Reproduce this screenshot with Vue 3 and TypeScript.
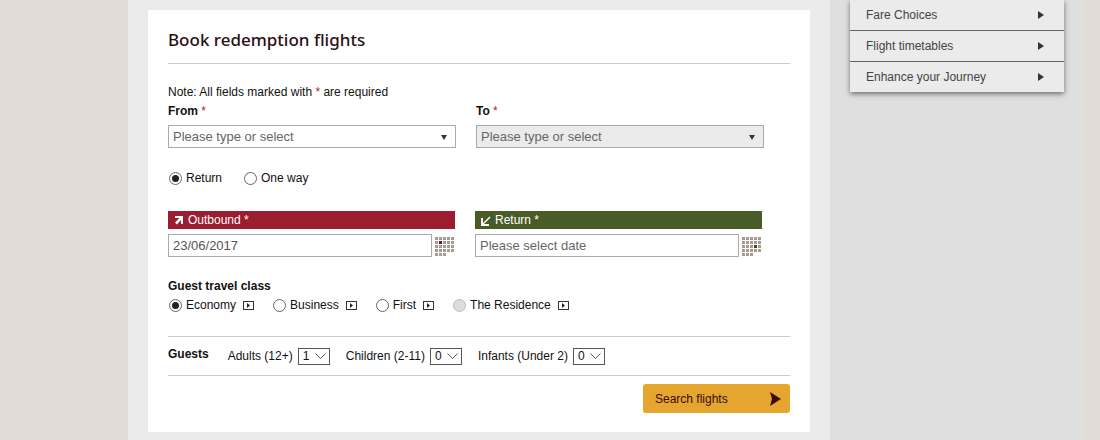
<script setup lang="ts">
import { ref } from 'vue'

interface CabinClass {
  id: string
  label: string
  disabled?: boolean
}
interface GuestType {
  id: string
  label: string
  min: number
}

const links: string[] = ['Fare Choices', 'Flight timetables', 'Enhance your Journey']
const classes: CabinClass[] = [
  { id: 'economy', label: 'Economy' },
  { id: 'business', label: 'Business' },
  { id: 'first', label: 'First' },
  { id: 'residence', label: 'The Residence', disabled: true },
]
const guestTypes: GuestType[] = [
  { id: 'adults', label: 'Adults (12+)', min: 1 },
  { id: 'children', label: 'Children (2-11)', min: 0 },
  { id: 'infants', label: 'Infants (Under 2)', min: 0 },
]

const from = ref('')
const to = ref('')
const trip = ref('return')
const outbound = ref('23/06/2017')
const inbound = ref('')
const cabin = ref('economy')
const guests = ref<Record<string, number>>({ adults: 1, children: 0, infants: 0 })

// Calendar glyph: five columns by five rows, the last row holding three days.
const days = Array.from({ length: 23 }, (_, i) => ({ x: (i % 5) * 4, y: Math.floor(i / 5) * 4 }))
</script>

<template>
  <div class="page">
    <main class="main">
      <form class="card" @submit.prevent>
        <h1 class="title">Book redemption flights</h1>
        <p class="note">Note: All fields marked with <span class="req">*</span> are required</p>

        <div class="places">
          <div>
            <label class="heading" for="from">From <span class="req">*</span></label>
            <div class="combo">
              <input id="from" v-model="from" class="box" type="text" placeholder="Please type or select" />
              <button class="drop" type="button" aria-label="Show departure cities">
                <svg width="6" height="5" viewBox="0 0 6 5"><path d="M0 0h6L3 5z" fill="#333" /></svg>
              </button>
            </div>
          </div>
          <div>
            <label class="heading" for="to">To <span class="req">*</span></label>
            <div class="combo">
              <input id="to" v-model="to" class="box" type="text" placeholder="Please type or select" disabled />
              <button class="drop" type="button" aria-label="Show arrival cities" disabled>
                <svg width="6" height="5" viewBox="0 0 6 5"><path d="M0 0h6L3 5z" fill="#333" /></svg>
              </button>
            </div>
          </div>
        </div>

        <div class="trip" role="radiogroup" aria-label="Trip type">
          <label class="option"><input v-model="trip" type="radio" name="trip" value="return" />Return</label>
          <label class="option"><input v-model="trip" type="radio" name="trip" value="oneway" />One way</label>
        </div>

        <div class="dates">
          <div>
            <label class="bar outbound" for="outbound">
              <svg width="12" height="12" viewBox="0 0 12 12">
                <path d="M2 2h8v8H8V6L4 10.500 2 8.500 6.500 4H2z" fill="#fff" />
              </svg>
              Outbound *
            </label>
            <div class="date">
              <input id="outbound" v-model="outbound" class="box" type="text" />
              <button class="cal" type="button" aria-label="Choose outbound date">
                <svg width="19" height="19" viewBox="0 0 19 19">
                  <rect v-for="(d, i) in days" :key="i" :x="d.x" :y="d.y" width="3" height="3" :fill="i === 6 ? '#7d0f26' : '#a89b90'" />
                </svg>
              </button>
            </div>
          </div>
          <div>
            <label class="bar inbound" for="inbound">
              <svg width="12" height="12" viewBox="0 0 12 12" fill="none" stroke="#fff">
                <path d="M2 4v7h7" stroke-width="2" />
                <path d="M2 11L10 3" stroke-width="1.500" />
              </svg>
              Return *
            </label>
            <div class="date">
              <input id="inbound" v-model="inbound" class="box" type="text" placeholder="Please select date" />
              <button class="cal" type="button" aria-label="Choose return date">
                <svg width="19" height="19" viewBox="0 0 19 19">
                  <rect v-for="(d, i) in days" :key="i" :x="d.x" :y="d.y" width="3" height="3" :fill="i === 13 ? '#3a4a16' : '#a89b90'" />
                </svg>
              </button>
            </div>
          </div>
        </div>

        <h2 id="cabin" class="heading">Guest travel class</h2>
        <div class="classes" role="radiogroup" aria-labelledby="cabin">
          <div v-for="c in classes" :key="c.id" class="class">
            <label class="option"><input v-model="cabin" type="radio" name="cabin" :value="c.id" :disabled="c.disabled" />{{ c.label }}</label>
            <button class="info" type="button" :aria-label="'About ' + c.label">
              <svg width="11" height="9" viewBox="0 0 11 9">
                <rect x="0.5" y="0.5" width="10" height="8" fill="#fff" stroke="#333" />
                <path d="M4 2l3 2.5L4 7z" fill="#222" />
              </svg>
            </button>
          </div>
        </div>

        <div class="guests">
          <h2 class="heading">Guests</h2>
          <div v-for="g in guestTypes" :key="g.id" class="guest">
            <label :for="g.id">{{ g.label }}</label>
            <span class="pick">
              <select :id="g.id" v-model="guests[g.id]">
                <option v-for="n in 9" :key="n" :value="n - 1 + g.min">{{ n - 1 + g.min }}</option>
              </select>
              <svg width="11" height="7" viewBox="0 0 11 7" fill="none" stroke="#555"><path d="M.5 .5l5 5 5-5" /></svg>
            </span>
          </div>
        </div>

        <button class="search" type="submit">
          Search flights
          <svg width="11" height="14" viewBox="0 0 11 14"><path d="M0 0l11 7L0 14l2-7z" fill="#3a0a0c" /></svg>
        </button>
      </form>
    </main>

    <aside class="side">
      <nav class="menu" aria-label="Related pages">
        <a v-for="l in links" :key="l" href="#">
          {{ l }}
          <svg width="6" height="8" viewBox="0 0 6 8"><path d="M0 0l6 4-6 4z" fill="#333" /></svg>
        </a>
      </nav>
    </aside>
  </div>
</template>

<style>
body {
  margin: 0;
  background: #e1dcd5;
}
</style>

<style scoped>
* {
  box-sizing: border-box;
}
.page {
  display: grid;
  grid-template-columns: minmax(0, 1fr) 254px;
  min-height: 100vh;
  margin: 0 16px 0 128px;
  background: #dfdfdf;
  color: #111;
  font: 12px/16px "Liberation Sans", Arial, sans-serif;
}
.main {
  padding: 10px 20px 8px;
  background: #ebebeb;
}
.card {
  padding: 16px 20px 19px;
  background: #fff;
}
.title {
  margin: 0;
  padding-bottom: 9px;
  border-bottom: 1px solid #ccc;
  color: #2a1014;
  font: 500 17px/28px "Noto Sans", sans-serif;
}
.note {
  margin: 20px 0 3px;
}
.req {
  color: #b5202f;
  font-weight: 400;
}
.heading {
  display: block;
  margin: 0;
  font-size: 12px;
  font-weight: 700;
  line-height: 16px;
}
.places,
.dates {
  display: grid;
  grid-template-columns: 1fr 1fr;
  gap: 20px;
  padding-right: 26px;
}
.combo {
  position: relative;
  margin-top: 6px;
}
.box {
  display: block;
  width: 100%;
  min-width: 0;
  height: 23px;
  margin: 0;
  padding: 0 4px;
  border: 1px solid #aaa;
  border-radius: 0;
  background: #fff;
  color: #555;
  font: 13px/16px "Liberation Sans", Arial, sans-serif;
}
.box::placeholder {
  color: #666;
  opacity: 1;
}
.box:disabled {
  background: #ebebeb;
}
button {
  margin: 0;
  padding: 0;
  border: 0;
  background: none;
}
svg {
  display: block;
  flex: none;
}
.drop {
  position: absolute;
  top: 1px;
  right: 1px;
  display: grid;
  place-items: center;
  width: 22px;
  height: 23px;
}
.trip,
.classes {
  display: flex;
}
.trip {
  gap: 21px;
  margin: 22px 0 25px;
}
.option {
  display: flex;
  align-items: center;
  gap: 3px;
}
.option input {
  display: grid;
  place-items: center;
  width: 13px;
  height: 13px;
  margin: 0 1px;
  border: 1px solid #666;
  border-radius: 50%;
  background: #fff;
  appearance: none;
}
.option input:checked::before {
  width: 7px;
  height: 7px;
  border-radius: 50%;
  background: #222;
  content: "";
}
.option input:disabled {
  border-color: #bbb;
  background: #ddd;
}
.dates {
  padding-right: 28px;
}
.bar {
  display: flex;
  align-items: center;
  gap: 3px;
  height: 18px;
  padding-left: 5px;
  color: #fff;
}
.outbound {
  background: #9b1d2f;
}
.inbound {
  background: #495b26;
}
.date {
  display: flex;
  gap: 3px;
  margin: 5px 0 21px;
}
.date .box {
  flex: 1;
}
.cal {
  align-self: flex-end;
  padding: 0 1px 1px 0;
}
.classes {
  gap: 18px;
  margin: 3px 0 23px;
}
.class {
  display: flex;
  align-items: center;
  gap: 7px;
}
.guests {
  display: flex;
  gap: 16px;
  padding: 9px 0;
  border: 1px solid #ccc;
  border-width: 1px 0;
}
.guests .heading {
  margin-right: 3px;
}
.guest {
  display: flex;
  align-items: center;
  gap: 5px;
  height: 20px;
}
.pick {
  position: relative;
}
.pick select {
  display: block;
  width: 32px;
  height: 17px;
  margin: 0;
  padding: 0 4px;
  border: 1px solid #555;
  border-radius: 0;
  background: #fff;
  color: #111;
  font: 12px/15px "Liberation Sans", Arial, sans-serif;
  appearance: none;
}
.pick svg {
  position: absolute;
  top: 5px;
  right: 4px;
  pointer-events: none;
}
.search {
  display: flex;
  align-items: center;
  justify-content: space-between;
  width: 147px;
  height: 29px;
  margin: 8px 0 0 auto;
  padding: 0 9px 0 12px;
  border-radius: 3px;
  background: #e4a62e;
  color: #3a0a0c;
  font: 12px/16px "Liberation Sans", Arial, sans-serif;
}
.side {
  padding: 0 20px;
}
.menu {
  background: #ebebeb;
  box-shadow: 0 2px 5px rgba(0, 0, 0, 0.5);
}
.menu a {
  display: flex;
  align-items: center;
  justify-content: space-between;
  height: 31px;
  padding: 0 20px 0 16px;
  border-bottom: 1px solid #666;
  color: #444;
  text-decoration: none;
}
.menu a:last-child {
  height: 30px;
  border-bottom: 0;
}
</style>
